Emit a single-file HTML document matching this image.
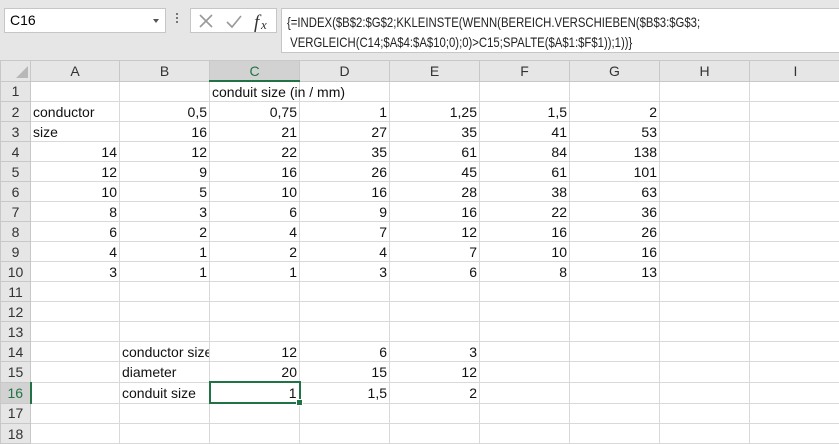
<!DOCTYPE html>
<html><head><meta charset="utf-8"><style>
body{margin:0;width:839px;height:439px;overflow:hidden;background:#fff;font-family:"Liberation Sans",Arial,sans-serif;position:relative}
.top{position:absolute;left:0;top:0;width:839px;height:61px;background:#e6e6e6}
.nb{position:absolute;left:4px;top:8px;width:162px;height:25px;background:#fff;border:1px solid #c6c6c6;box-sizing:border-box;font-size:14px;line-height:23px;padding-left:5px}
.nb:after{content:"";position:absolute;right:6px;top:10px;border-left:3px solid transparent;border-right:3px solid transparent;border-top:4px solid #555}
.dots{position:absolute;left:176px;top:13px;width:2px;height:12px;background:repeating-linear-gradient(#777 0 2px,transparent 2px 4px)}
.btns{position:absolute;left:190px;top:8px;width:87px;height:25px;background:#fff;border:1px solid #c6c6c6;box-sizing:border-box}
.fb{position:absolute;left:281px;top:8px;width:560px;height:45px;background:#fff;border:1px solid #c6c6c6;box-sizing:border-box;font-size:14px;line-height:20px;padding:3px 0 0 5px;color:#222;overflow:hidden}
.fb div{transform:scaleX(0.81);transform-origin:0 0;white-space:nowrap}
table{position:absolute;left:0;top:60px;border-collapse:collapse;table-layout:fixed;font-size:14px;width:841px}
td{height:19px;line-height:18px;border:1px solid #d9d9d9;padding:0 2px;white-space:nowrap;overflow:hidden;text-align:right;color:#111}
td.l{text-align:left}
td.ov{overflow:visible;position:relative}
tr.h td{background:#e6e6e6;text-align:center;border-color:#c8c8c8;color:#333}
td.r{background:#e6e6e6;text-align:center;border-color:#c8c8c8;color:#333}
tr.h td.sel{background:#d2d2d2;color:#217346;border-bottom:2px solid #217346}
td.rs{background:#d2d2d2;color:#217346;border-right:2px solid #217346}
td.act{border:2px solid #217346;position:relative;overflow:visible}
</style></head><body>
<div class="top"></div>
<div class="nb">C16</div>
<div class="dots"></div>
<div class="btns">
<svg width="87" height="25" style="position:absolute;left:0;top:0"><path d="M9 6l12 12M21 6L9 18" stroke="#999" stroke-width="1.6" fill="none"/><path d="M36 13l5 5 9-11" stroke="#999" stroke-width="1.6" fill="none"/><text x="63" y="19" font-family="Liberation Serif" font-style="italic" font-size="19" fill="#333">f</text><text x="70" y="20" font-family="Liberation Serif" font-style="italic" font-size="13" fill="#333">x</text></svg>
</div>
<div class="fb"><div>{=INDEX($B$2:$G$2;KKLEINSTE(WENN(BEREICH.VERSCHIEBEN($B$3:$G$3;</div><div>&nbsp;VERGLEICH(C14;$A$4:$A$10;0);0)&gt;C15;SPALTE($A$1:$F$1));1))}</div></div>
<table>
<colgroup><col style="width:30px"><col style="width:89px"><col style="width:90px"><col style="width:90px"><col style="width:90px"><col style="width:90px"><col style="width:90px"><col style="width:90px"><col style="width:90px"><col style="width:92px"></colgroup>
<tr class="h"><td style="background:#e6e6e6"><svg width="12" height="12" style="position:relative;left:6px;top:2px"><path d="M12 0V12H0Z" fill="#b8b8b8"/></svg></td><td>A</td><td>B</td><td class="sel">C</td><td>D</td><td>E</td><td>F</td><td>G</td><td>H</td><td>I</td></tr>
<tr><td class="r">1</td><td></td><td></td><td class="l ov">conduit size (in / mm)</td><td></td><td></td><td></td><td></td><td></td><td></td></tr>
<tr><td class="r">2</td><td class="l">conductor</td><td>0,5</td><td>0,75</td><td>1</td><td>1,25</td><td>1,5</td><td>2</td><td></td><td></td></tr>
<tr><td class="r">3</td><td class="l">size</td><td>16</td><td>21</td><td>27</td><td>35</td><td>41</td><td>53</td><td></td><td></td></tr>
<tr><td class="r">4</td><td>14</td><td>12</td><td>22</td><td>35</td><td>61</td><td>84</td><td>138</td><td></td><td></td></tr>
<tr><td class="r">5</td><td>12</td><td>9</td><td>16</td><td>26</td><td>45</td><td>61</td><td>101</td><td></td><td></td></tr>
<tr><td class="r">6</td><td>10</td><td>5</td><td>10</td><td>16</td><td>28</td><td>38</td><td>63</td><td></td><td></td></tr>
<tr><td class="r">7</td><td>8</td><td>3</td><td>6</td><td>9</td><td>16</td><td>22</td><td>36</td><td></td><td></td></tr>
<tr><td class="r">8</td><td>6</td><td>2</td><td>4</td><td>7</td><td>12</td><td>16</td><td>26</td><td></td><td></td></tr>
<tr><td class="r">9</td><td>4</td><td>1</td><td>2</td><td>4</td><td>7</td><td>10</td><td>16</td><td></td><td></td></tr>
<tr><td class="r">10</td><td>3</td><td>1</td><td>1</td><td>3</td><td>6</td><td>8</td><td>13</td><td></td><td></td></tr>
<tr><td class="r">11</td><td></td><td></td><td></td><td></td><td></td><td></td><td></td><td></td><td></td></tr>
<tr><td class="r">12</td><td></td><td></td><td></td><td></td><td></td><td></td><td></td><td></td><td></td></tr>
<tr><td class="r">13</td><td></td><td></td><td></td><td></td><td></td><td></td><td></td><td></td><td></td></tr>
<tr><td class="r">14</td><td></td><td class="l">conductor size</td><td>12</td><td>6</td><td>3</td><td></td><td></td><td></td><td></td></tr>
<tr><td class="r">15</td><td></td><td class="l">diameter</td><td>20</td><td>15</td><td>12</td><td></td><td></td><td></td><td></td></tr>
<tr><td class="r rs">16</td><td></td><td class="l">conduit size</td><td class="act">1<div style="position:absolute;right:-4px;bottom:-4px;width:5px;height:5px;background:#217346;border:1px solid #fff"></div></td><td>1,5</td><td>2</td><td></td><td></td><td></td><td></td></tr>
<tr><td class="r">17</td><td></td><td></td><td></td><td></td><td></td><td></td><td></td><td></td><td></td></tr>
<tr><td class="r">18</td><td></td><td></td><td></td><td></td><td></td><td></td><td></td><td></td><td></td></tr>
</table>
</body></html>
